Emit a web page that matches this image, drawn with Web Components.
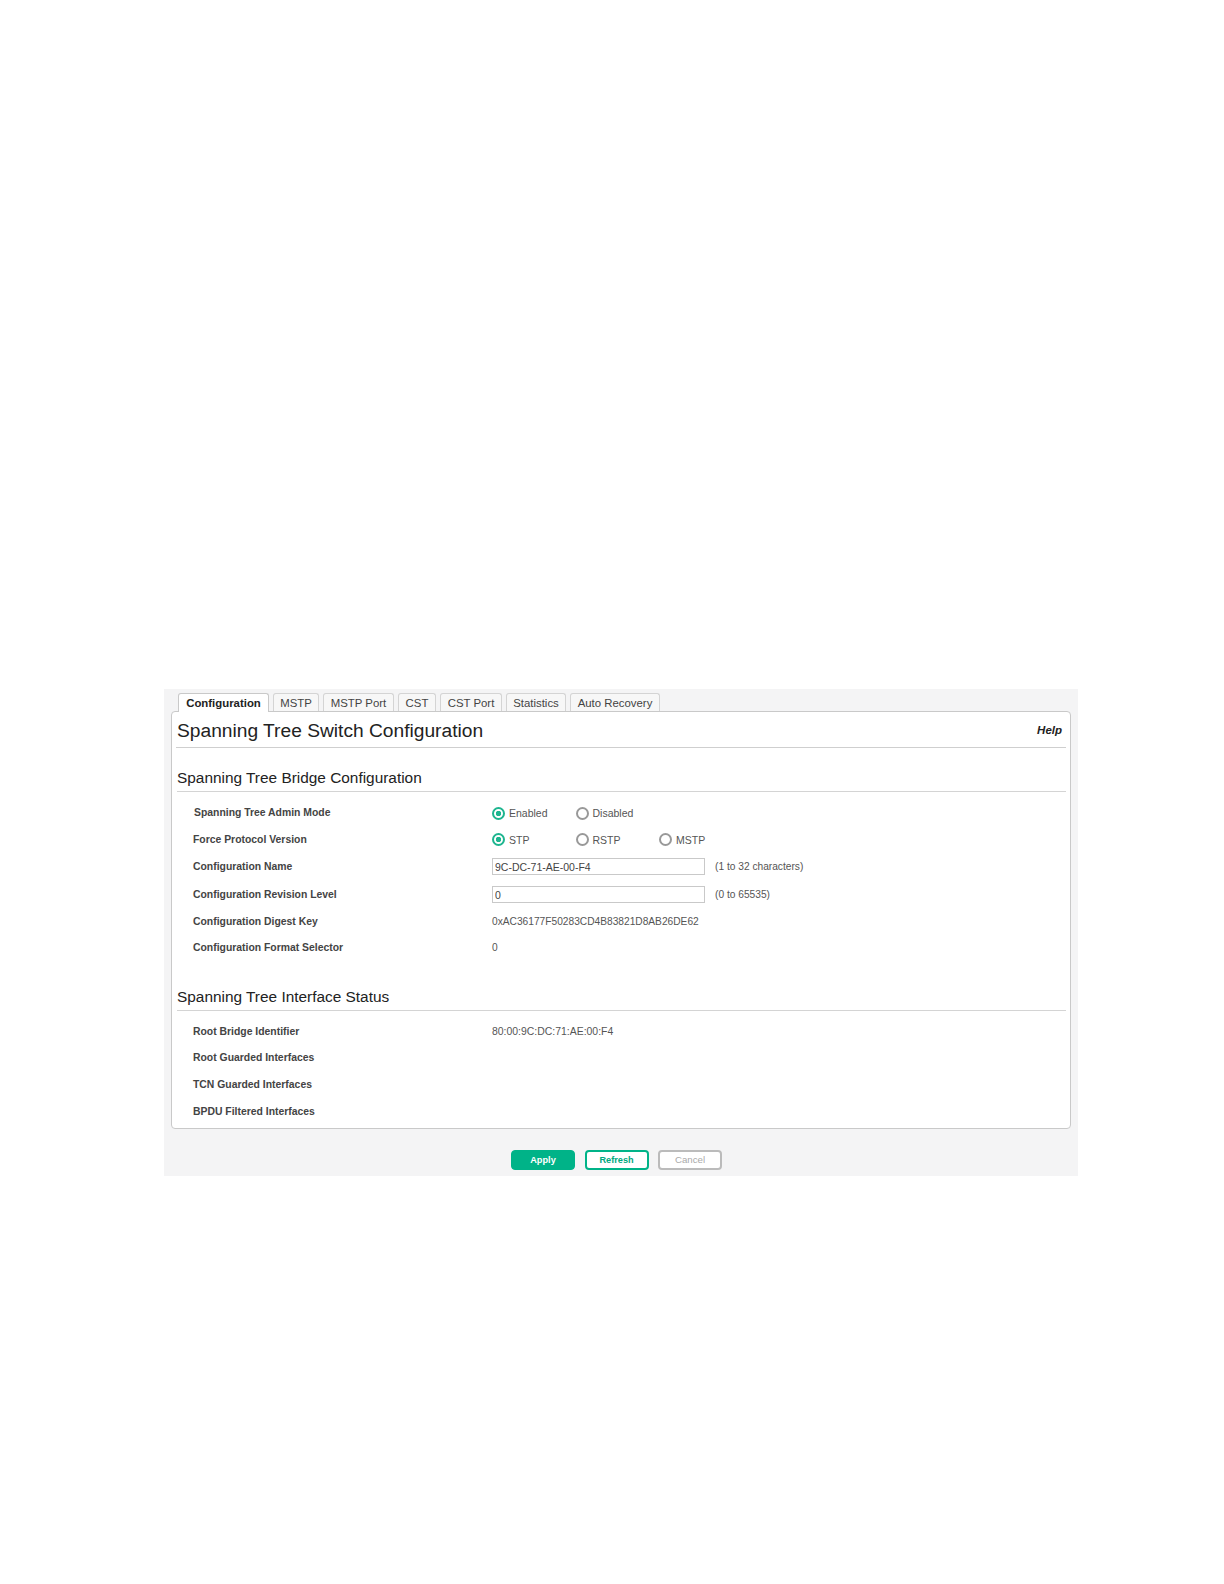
<!DOCTYPE html>
<html>
<head>
<meta charset="utf-8">
<title>Spanning Tree Switch Configuration</title>
<style>
  html, body { margin: 0; background: #fff; }
  body { font-family: "Liberation Sans", Arial, sans-serif; padding: 689px 0 0 164px; }
</style>
</head>
<body>
<stp-page>
  <stp-tabs slot="tabs">
    <stp-tab active style="width:91px">Configuration</stp-tab>
    <stp-tab style="width:46px">MSTP</stp-tab>
    <stp-tab style="width:71px">MSTP Port</stp-tab>
    <stp-tab style="width:38px">CST</stp-tab>
    <stp-tab style="width:62px">CST Port</stp-tab>
    <stp-tab style="width:60px">Statistics</stp-tab>
    <stp-tab style="width:90px">Auto Recovery</stp-tab>
  </stp-tabs>

  <stp-section heading="Spanning Tree Bridge Configuration" style="--sec-top:20px;--sec-gap:7px">
    <stp-row label="Spanning Tree Admin Mode" style="--row-h:27px;--label-x:1px">
      <stp-radio checked>Enabled</stp-radio><stp-radio>Disabled</stp-radio>
    </stp-row>
    <stp-row label="Force Protocol Version" style="--row-h:26px">
      <stp-radio checked>STP</stp-radio><stp-radio>RSTP</stp-radio><stp-radio>MSTP</stp-radio>
    </stp-row>
    <stp-row label="Configuration Name" style="--row-h:28px">
      <stp-field value="9C-DC-71-AE-00-F4" hint="(1 to 32 characters)"></stp-field>
    </stp-row>
    <stp-row label="Configuration Revision Level" style="--row-h:28px">
      <stp-field value="0" hint="(0 to 65535)"></stp-field>
    </stp-row>
    <stp-row label="Configuration Digest Key" style="--row-h:26px">0xAC36177F50283CD4B83821D8AB26DE62</stp-row>
    <stp-row label="Configuration Format Selector" style="--row-h:27px">0</stp-row>
  </stp-section>

  <stp-section heading="Spanning Tree Interface Status" style="--sec-top:26px;--sec-gap:7px">
    <stp-row label="Root Bridge Identifier" style="--row-h:26px;font-size:10.45px">80:00:9C:DC:71:AE:00:F4</stp-row>
    <stp-row label="Root Guarded Interfaces" style="--row-h:27px"></stp-row>
    <stp-row label="TCN Guarded Interfaces" style="--row-h:27px"></stp-row>
    <stp-row label="BPDU Filtered Interfaces" style="--row-h:27px"></stp-row>
  </stp-section>

  <stp-button slot="actions" kind="primary">Apply</stp-button>
  <stp-button slot="actions" kind="outline">Refresh</stp-button>
  <stp-button slot="actions" kind="disabled">Cancel</stp-button>
</stp-page>

<script>
// HELPER

function define(name, css, markup, setup) {
  customElements.define(name, class extends HTMLElement {
    constructor() {
      super();
      const shadow = this.attachShadow({ mode: "open" });
      shadow.innerHTML = `<style>${css}</style>${markup}`;
    }
    connectedCallback() {
      if (setup) setup(this, this.shadowRoot);
    }
  });
}

// COMPONENTS

define("stp-page", `
  :host { display: block; width: 914px; height: 487px; background: #f4f4f5; box-sizing: border-box; padding: 4px 7px 0; }
  .tabs { display: block; padding-left: 7px; }
  .card { background: #fff; border: 1px solid #c9c9c9; border-radius: 4px; height: 418px; box-sizing: border-box; padding: 0 4px; }
  .head { display: flex; justify-content: space-between; align-items: center; box-sizing: border-box; height: 36px; padding-top: 3px; border-bottom: 1px solid #cfcfcf; }
  h1 { margin: 0; padding-left: 1px; font-size: 19.2px; font-weight: 400; color: #222; }
  a { font-size: 11.5px; font-weight: 700; font-style: italic; color: #222; margin: -2px 4px 0 0; }
  .actions { display: flex; justify-content: center; gap: 9.5px; margin-top: 21px; padding-right: 9px; }
`, `
  <slot class="tabs" name="tabs"></slot>
  <div class="card">
    <div class="head"><h1>Spanning Tree Switch Configuration</h1><a>Help</a></div>
    <slot></slot>
  </div>
  <div class="actions"><slot name="actions"></slot></div>
`);

define("stp-tabs", `
  :host { display: flex; gap: 4px; height: 18px; }
`, `<slot></slot>`);

define("stp-tab", `
  :host { display: block; box-sizing: border-box; height: 18px; text-align: center; font-size: 11.4px; line-height: 18px; color: #444;
    background: #f7f7f7; border: 1px solid #d4d4d4; border-bottom: 0; border-radius: 3px 3px 0 0; white-space: nowrap; }
  :host([active]) { background: #fff; border-color: #c9c9c9; color: #222; font-weight: 700; height: 19px; position: relative; z-index: 1; }
`, `<slot></slot>`);

define("stp-section", `
  :host { display: block; padding-top: var(--sec-top); }
  h2 { margin: 0 0 var(--sec-gap) 1px; font-size: 15.4px; font-weight: 400; color: #222; height: 23px; line-height: 20px; border-bottom: 1px solid #d4d4d4; }
`, `<h2></h2><slot></slot>`, (el, root) => {
  root.querySelector("h2").textContent = el.getAttribute("heading");
});

define("stp-row", `
  :host { display: flex; align-items: center; height: var(--row-h); font-size: 10.2px; color: #555; }
  .label { width: 316px; box-sizing: border-box; padding-left: calc(17px + var(--label-x, 0px)); font-weight: 700; color: #444; font-size: 10.4px; white-space: nowrap; }
  .value { display: flex; align-items: center; }
`, `<div class="label"></div><div class="value"><slot></slot></div>`, (el, root) => {
  root.querySelector(".label").textContent = el.getAttribute("label");
});

define("stp-radio", `
  :host { display: flex; align-items: center; width: 83.5px; font-size: 10.5px; color: #555; margin-top: 1px; }
  .dot { box-sizing: border-box; width: 13px; height: 13px; border-radius: 50%; border: 2px solid #999; margin-right: 4px; background: #fff; flex: none; }
  :host([checked]) .dot { border-color: #1db58f; background: radial-gradient(circle, #1db58f 0 2.5px, #fff 3px); }
`, `<span class="dot"></span><slot></slot>`);

define("stp-field", `
  :host { display: flex; align-items: center; font-size: 10.2px; color: #555; margin-top: 1px; }
  input { box-sizing: border-box; width: 213px; height: 17px; border: 1px solid #c9c9c9; background: #fff; padding: 0 2px; margin: 0 10px 0 0; font: 10.5px "Liberation Sans", Arial, sans-serif; color: #444; border-radius: 0; outline: 0; }
`, `<input type="text"><span></span>`, (el, root) => {
  root.querySelector("input").setAttribute("value", el.getAttribute("value"));
  root.querySelector("span").textContent = el.getAttribute("hint");
});

define("stp-button", `
  :host { display: block; box-sizing: border-box; width: 64px; height: 20px; border-radius: 4px; text-align: center; font-size: 9.2px; line-height: 18px; font-weight: 700; border: 1px solid #00b388; }
  :host([kind="primary"]) { background: #00b388; color: #fff; }
  :host([kind="outline"]) { background: #fff; color: #00a97f; border-width: 2px; line-height: 16px; }
  :host([kind="disabled"]) { background: #fff; color: #aaa; border-color: #bbb; border-width: 2px; line-height: 16px; font-weight: 400; font-size: 9.7px; }
`, `<slot></slot>`);
</script>
</body>
</html>
